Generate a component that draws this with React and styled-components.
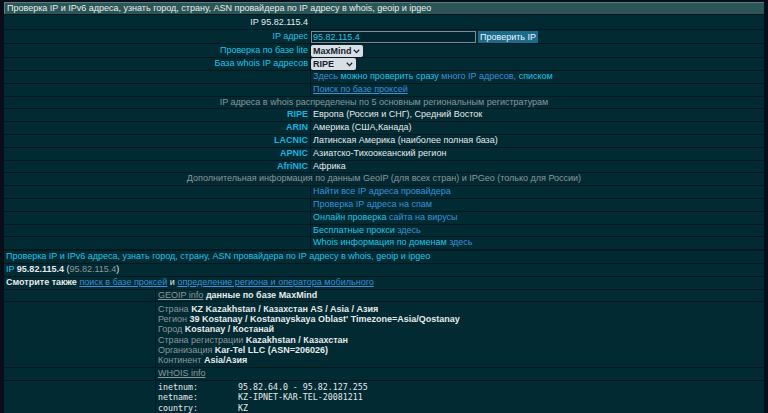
import React from 'react';
import styled, { createGlobalStyle } from 'styled-components';

const C = {
  cell: '#022a33',
  line: '#011a22',
  cyan: '#20c4e4',
  label: '#1cb0dc',
  blue: '#3b8fd6',
  white: '#e6e9ea',
  gray: '#8b9699',
};

const Global = createGlobalStyle`
  html, body { margin: 0; padding: 0; background: #070d19; }
  body {
    font-family: "Liberation Sans", Arial, sans-serif;
    font-size: 9px;
    color: ${C.white};
  }
`;

const Page = styled.div`
  padding: 2px 4px 0 4px;
  display: flex;
  flex-direction: column;
  height: 411px;
  overflow: hidden;
`;

const TitleBar = styled.div`
  background: #2b5557;
  color: #e8eeee;
  border-top: 1px solid #56807f;
  border-left: 1px solid #56807f;
  padding: 0 2px;
  height: 11px;
  line-height: 11px;
  white-space: nowrap;
`;

const FormGrid = styled.div`
  display: grid;
  grid-template-columns: 306px 1fr;
  gap: 1px;
  background: ${C.line};
  padding: 1px 0;
`;

const Cell = styled.div`
  background: ${C.cell};
  padding: 0 2px;
  line-height: ${(p) => p.$lh || '11.8px'};
  min-height: ${(p) => p.$h || '0'};
  text-align: ${(p) => p.$align || 'left'};
  color: ${(p) => p.$color || C.white};
  grid-column: ${(p) => (p.$wide ? '1 / -1' : 'auto')};
  white-space: nowrap;
  display: ${(p) => (p.$flex ? 'flex' : 'block')};
  align-items: center;
`;

const Separator = styled.div`
  height: 3px;
  background: #0b3a47;
`;

const ResultGrid = styled.div`
  display: grid;
  grid-template-columns: 1fr;
  gap: 1px;
  background: ${C.line};
  padding-top: 1px;
`;

const InfoGrid = styled.div`
  display: grid;
  grid-template-columns: 151px 1fr;
  gap: 1px;
  background: ${C.line};
`;

const T = styled.span`
  color: ${(p) => p.$c || C.white};
  font-weight: ${(p) => (p.$b ? 'bold' : 'normal')};
  text-decoration: ${(p) => (p.$u ? 'underline' : 'none')};
`;

const IpInput = styled.input`
  box-sizing: border-box;
  width: 165px;
  height: 12px;
  margin: 0;
  border: 1px solid #7d8c92;
  background: #01252e;
  color: ${C.cyan};
  font: 9px "Liberation Sans", Arial, sans-serif;
  padding: 0 1px;
  outline: none;
`;

const Button = styled.button`
  box-sizing: border-box;
  height: 12px;
  width: 60px;
  margin: 0 0 0 2px;
  padding: 0;
  border: 0;
  background: #1c6b8d;
  color: #eaf6fb;
  font: 9px "Liberation Sans", Arial, sans-serif;
`;

const SelectWrap = styled.span`
  position: relative;
  display: inline-flex;
  align-items: center;
`;

const Select = styled.select`
  appearance: none;
  -webkit-appearance: none;
  box-sizing: border-box;
  height: 12px;
  width: ${(p) => p.$w};
  margin: 0;
  border: 0;
  border-radius: 2px;
  background: #d9dee5;
  color: #17212c;
  font: bold 9px "Liberation Sans", Arial, sans-serif;
  padding: 0 9px 0 2px;
  outline: none;
`;

const Chevron = styled.svg`
  position: absolute;
  right: 3px;
  top: 4px;
  pointer-events: none;
`;

const GeoBlock = styled.div`
  line-height: 10.3px;
  padding: 1.5px 0;
`;

const Mono = styled.pre`
  margin: 0;
  font-family: "DejaVu Sans Mono", monospace;
  font-size: 8.3px;
  line-height: 10.5px;
  color: ${C.white};
  padding-top: 1px;
`;

const Chev = () => (
  <Chevron width="7" height="5" viewBox="0 0 7 5">
    <path d="M0.8 0.8 L3.5 3.6 L6.2 0.8" fill="none" stroke="#17212c" strokeWidth="1.3" />
  </Chevron>
);

const regs = [
  ['RIPE', 'Европа (Россия и СНГ), Средний Восток'],
  ['ARIN', 'Америка (США,Канада)'],
  ['LACNIC', 'Латинская Америка (наиболее полная база)'],
  ['APNIC', 'Азиатско-Тихоокеанский регион'],
  ['AfriNIC', 'Африка'],
];

const geo = [
  ['Страна', 'KZ Kazakhstan / Казахстан AS / Asia / Азия'],
  ['Регион', "39 Kostanay / Kostanayskaya Oblast' Timezone=Asia/Qostanay"],
  ['Город', 'Kostanay / Костанай'],
  ['Страна регистрации', 'Kazakhstan / Казахстан'],
  ['Организация', 'Kar-Tel LLC (ASN=206026)'],
  ['Континент', 'Asia/Азия'],
];

export default function App() {
  return (
    <>
      <Global />
      <Page>
        <TitleBar>Проверка IP и IPv6 адреса, узнать город, страну, ASN провайдера по IP адресу в whois, geoip и ipgeo</TitleBar>
        <FormGrid>
          <Cell $align="right" $h="14px" $lh="14px">IP 95.82.115.4</Cell>
          <Cell $h="14px" />
          <Cell $align="right" $color={C.cyan} $lh="13px">IP адрес</Cell>
          <Cell $flex $h="13px" style={{ paddingLeft: 0 }}>
            <IpInput defaultValue="95.82.115.4" />
            <Button>Проверить IP</Button>
          </Cell>
          <Cell $align="right" $color={C.cyan} $lh="13px">Проверка по базе lite</Cell>
          <Cell $flex $h="13px" style={{ paddingLeft: 0 }}>
            <SelectWrap>
              <Select $w="52px" defaultValue="MaxMind">
                <option>MaxMind</option>
              </Select>
              <Chev />
            </SelectWrap>
          </Cell>
          <Cell $align="right" $color={C.cyan}>База whois IP адресов</Cell>
          <Cell $flex style={{ paddingLeft: 0 }}>
            <SelectWrap>
              <Select $w="45px" defaultValue="RIPE">
                <option>RIPE</option>
              </Select>
              <Chev />
            </SelectWrap>
          </Cell>
          <Cell />
          <Cell>
            <T $c={C.blue}>Здесь</T> <T $c={C.cyan}>можно проверить сразу</T> <T $c={C.blue}>много IP адресов,</T>{' '}
            <T $c={C.cyan}>списком</T>
          </Cell>
          <Cell />
          <Cell>
            <T $c={C.blue} $u>Поиск по базе проксей</T>
          </Cell>
          <Cell $wide $align="center" $color={C.gray}>
            IP адреса в whois распределены по 5 основным региональным регистратурам
          </Cell>
          {regs.map(([k, v]) => (
            <React.Fragment key={k}>
              <Cell $align="right" $color={C.label}>
                <T $c={C.label} $b>{k}</T>
              </Cell>
              <Cell>{v}</Cell>
            </React.Fragment>
          ))}
          <Cell $wide $align="center" $color={C.gray}>
            Дополнительная информация по данным GeoIP (для всех стран) и IPGeo (только для России)
          </Cell>
          <Cell />
          <Cell><T $c={C.blue}>Найти все IP адреса провайдера</T></Cell>
          <Cell />
          <Cell><T $c={C.blue}>Проверка IP адреса на спам</T></Cell>
          <Cell />
          <Cell><T $c={C.cyan}>Онлайн проверка</T> <T $c={C.blue}>сайта на вирусы</T></Cell>
          <Cell />
          <Cell><T $c={C.cyan}>Бесплатные прокси</T> <T $c={C.blue}>здесь</T></Cell>
          <Cell />
          <Cell><T $c={C.cyan}>Whois информация по доменам</T> <T $c={C.blue}>здесь</T></Cell>
        </FormGrid>
        <Separator />
        <ResultGrid>
          <Cell $color={C.cyan}>Проверка IP и IPv6 адреса, узнать город, страну, ASN провайдера по IP адресу в whois, geoip и ipgeo</Cell>
          <Cell>
            <T $c={C.cyan}>IP</T> <T $b>95.82.115.4</T> (<T $c={C.gray}>95.82.115.4</T>)
          </Cell>
          <Cell>
            <T $b>Смотрите также</T> <T $c={C.blue} $u>поиск в базе проксей</T> и{' '}
            <T $c={C.blue} $u>определение региона и оператора мобильного</T>
          </Cell>
          <InfoGrid>
            <Cell />
            <Cell>
              <T $c={C.gray} $u>GEOIP info</T> <T $b>данные по базе MaxMind</T>
            </Cell>
            <Cell />
            <Cell>
              <GeoBlock>
                {geo.map(([k, v]) => (
                  <div key={k}>
                    <T $c={C.gray}>{k}</T> <T $b>{v}</T>
                  </div>
                ))}
              </GeoBlock>
            </Cell>
            <Cell />
            <Cell>
              <T $c={C.gray} $u>WHOIS info</T>
            </Cell>
            <Cell />
            <Cell>
              <Mono>{`inetnum:        95.82.64.0 - 95.82.127.255
netname:        KZ-IPNET-KAR-TEL-20081211
country:        KZ`}</Mono>
            </Cell>
          </InfoGrid>
        </ResultGrid>
      </Page>
    </>
  );
}
